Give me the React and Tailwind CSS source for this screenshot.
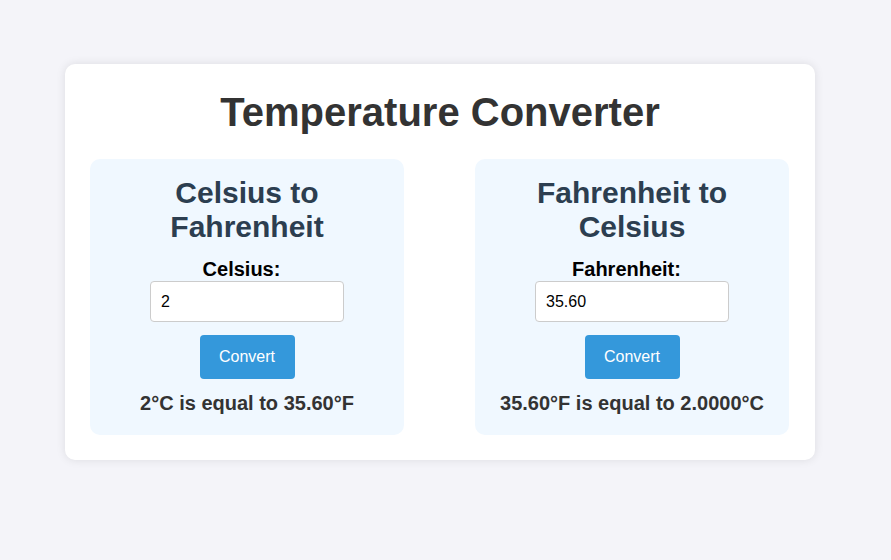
const Panel = ({ title, label, value, result }) => (
  <div className="w-[314px] rounded-[10px] bg-[#f0f8ff] pt-[17px] pb-[20px] flex flex-col items-center">
    <h2 className="text-[30px] leading-[34px] font-bold text-[#2c3e50] text-center">
      {title[0]}
      <br />
      {title[1]}
    </h2>
    <label className="mt-[14px] pr-[11px] text-[20px] leading-[23px] font-bold text-black">{label}</label>
    <input
      type="text"
      defaultValue={value}
      className="w-[194px] h-[41px] border border-[#cccccc] rounded-[4px] bg-white px-[10px] text-[16px] text-black outline-none"
    />
    <button className="mt-[13px] w-[95px] h-[44px] rounded-[4px] bg-[#3498db] text-white text-[16px]">
      Convert
    </button>
    <p className="mt-[13px] text-[20px] leading-[23px] font-bold text-[#333333]">{result}</p>
  </div>
);

export default function App() {
  return (
    <div className="min-h-screen bg-[#f4f4f9] pt-[64px] font-['Liberation_Sans',Arial,sans-serif]">
      <div className="ml-[65px] w-[750px] rounded-[10px] bg-white p-[25px] shadow-[0_0_10px_rgba(0,0,0,0.1)]">
        <h1 className="text-[40px] leading-[46px] font-bold text-[#333333] text-center">
          Temperature Converter
        </h1>
        <div className="mt-[24px] flex gap-[71px]">
          <Panel
            title={["Celsius to", "Fahrenheit"]}
            label="Celsius:"
            value="2"
            result="2°C is equal to 35.60°F"
          />
          <Panel
            title={["Fahrenheit to", "Celsius"]}
            label="Fahrenheit:"
            value="35.60"
            result="35.60°F is equal to 2.0000°C"
          />
        </div>
      </div>
    </div>
  );
}
